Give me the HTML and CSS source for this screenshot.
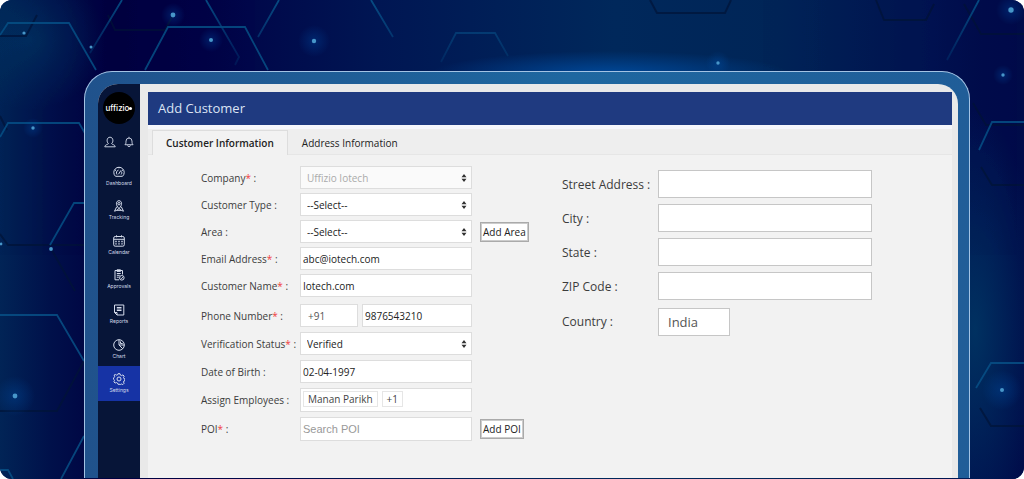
FILE: index.html
```html
<!DOCTYPE html>
<html lang="en">
<head>
  <meta charset="UTF-8" />
  <meta name="viewport" content="width=device-width, initial-scale=1.0" />
  <title>Add Customer</title>
  <link rel="stylesheet" href="styles.css">
</head>
<body>

<div class="stage">
  <!-- hexagon backdrop -->
  <svg class="backdrop" viewBox="0 0 1024 479" preserveAspectRatio="none" aria-hidden="true">
    <defs>
      <linearGradient id="base">
        <stop offset="0" stop-color="#012456" />
        <stop offset="0.05" stop-color="#00104a" />
        <stop offset="0.11" stop-color="#000040" />
        <stop offset="0.2" stop-color="#000347" />
        <stop offset="0.37" stop-color="#001653" />
        <stop offset="0.6" stop-color="#00285b" />
        <stop offset="0.76" stop-color="#002557" />
        <stop offset="0.9" stop-color="#001451" />
        <stop offset="0.96" stop-color="#000d4c" />
        <stop offset="1" stop-color="#000b49" />
      </linearGradient>
      <radialGradient id="teal">
        <stop offset="0" stop-color="#003a66" />
        <stop offset="1" stop-color="#003a66" stop-opacity="0" />
      </radialGradient>
      <radialGradient id="blue">
        <stop offset="0" stop-color="#0050a8" />
        <stop offset="1" stop-color="#0050a8" stop-opacity="0" />
      </radialGradient>
      <linearGradient id="fade" gradientUnits="userSpaceOnUse" x1="0" y1="0" x2="0" y2="72">
        <stop offset="0" stop-color="#08568c" />
        <stop offset="1" stop-color="#08568c" stop-opacity="0.15" />
      </linearGradient>
    </defs>
    <rect width="1024" height="479" fill="url(#base)" />
    <ellipse cx="30" cy="40" rx="75" ry="70" fill="url(#teal)" opacity="0.6" />
    <ellipse cx="975" cy="330" rx="65" ry="220" fill="url(#teal)" opacity="0.8" />
    <ellipse cx="610" cy="74" rx="180" ry="23" fill="url(#blue)" opacity="0.8" />
    <g class="hex-dark">
      <path d="M0 36H26L37 15M108 15L115 30H165L173 15M0 116L7 130M0 234L8 245H84M50 247L75 291M84 361L57 411H0" />
      <path d="M650 0L657 13H725L731 0M876 0L884 20H926L934 4M964 4L981 34H1024M973 103L986 125H1024M981 167L992 185H1024M980 408L991 426H1024" />
    </g>
    <g class="hex-line">
      <path d="M0 35L8 23H69L96 70M145 70L168 27H245L268 70M0 137L8 123H79L86 135M50 245L74 203H84M0 315H57L84 361M84 436L61 479M0 470H8L13 479" />
      <path d="M979 150L992 122H1024M976 388L991 363H1024" />
      <path stroke="url(#fade)" d="M122 0L90 53M206 0L239 57L235 65M279 0L258 37M371 0L393 37M441 62L456 33H495L508 56M979 0L947 60" />
    </g>
    <g class="glow">
      <circle cx="173" cy="15" r="12" />
      <circle cx="211" cy="40" r="12" />
      <circle cx="314" cy="41" r="16" />
      <circle cx="1011" cy="10" r="15" />
      <circle cx="1003" cy="75" r="10" />
      <circle cx="718" cy="63" r="12" />
      <circle cx="15" cy="396" r="20" />
      <circle cx="1002" cy="390" r="20" />
      <circle cx="33" cy="128" r="10" />
    </g>
    <g class="dots">
      <circle cx="173" cy="15" r="2.4" />
      <circle cx="211" cy="40" r="2" />
      <circle cx="314" cy="41" r="2.2" />
      <circle cx="24" cy="33" r="1.6" />
      <circle cx="91" cy="47" r="1.5" />
      <circle cx="33" cy="128" r="1.7" />
      <circle cx="51" cy="249" r="1.9" />
      <circle cx="1" cy="244" r="1.4" />
      <circle cx="15" cy="396" r="2.4" />
      <circle cx="718" cy="63" r="1.7" />
      <circle cx="1011" cy="10" r="2.7" />
      <circle cx="1003" cy="75" r="1.7" />
      <circle cx="1002" cy="390" r="2" />
    </g>
  </svg>

  <div class="device">
    <div class="screen">

      <aside class="sidebar">
        <div class="logo">uffizio<span class="logo-dot"></span></div>
        <div class="quick">
          <button type="button" aria-label="Account">
            <svg width="12" height="12" viewBox="0 0 13 12"><path d="M4.8 7.6C2.5 6.2 2.8 .8 6.5 .8s4 5.4 1.7 6.8c.2 1.2 3.7 1 4 3.6H.8c.3-2.6 3.8-2.4 4-3.6z" /></svg>
          </button>
          <button type="button" aria-label="Notifications">
            <svg width="10" height="12" viewBox="0 0 11 13"><path d="M1 9.5c1.2-1 1.2-2 1.2-4a3.3 3.3 0 0 1 6.6 0c0 2 0 3 1.2 4zM5.5 2V.8M4 10.2c.2 2 2.8 2 3 0" /></svg>
          </button>
        </div>
        <nav class="menu">
          <a href="#dashboard">
            <svg width="12" height="12" viewBox="0 0 12 12"><path d="M2.5 10.3a5.2 5.2 0 1 1 7 0zM4 8.5a2.8 2.8 0 0 1 1.5-4.4M8.5 5.5c.5 1 .4 2.2-.4 3M5.5 8.2L8 4.3M6 1v1.3M2 4l1 .6M10 4l-1 .6" /></svg>
            Dashboard
          </a>
          <a href="#tracking">
            <svg width="12" height="12" viewBox="0 0 12 12"><path d="M6 8.5C2 4.8 3.2 .7 6 .7s4 4.1 0 7.8z" /><circle cx="6" cy="3.7" r="1.2" /><path d="M3.7 6.8L1.5 11.2l2.3-.9L6 8.5l2.2 1.8 2.3.9-2.2-4.4M3.8 10.3h4.4" /></svg>
            Tracking
          </a>
          <a href="#calendar">
            <svg width="12" height="12" viewBox="0 0 12 12"><rect x=".7" y="1.5" width="10.6" height="9.7" rx="1.5" /><path d="M.7 4.3h10.6M3.5 .3v2M8.5 .3v2" /><path d="M2.3 6.5h7.4M2.3 8.8h7.4" stroke-dasharray="1.4 1.6" stroke-width="1.3" /></svg>
            Calendar
          </a>
          <a href="#approvals">
            <svg width="12" height="12" viewBox="0 0 12 12"><path d="M6 10.8H2V1.5h7.5v4M4 .8h3.5v1.6H4zM3.8 4.5h4M3.8 6.3h3M3.8 8.2h2" /><circle cx="8.8" cy="8.8" r="2.3" /><path d="M7.8 8.8l.8.8 1.3-1.5" /></svg>
            Approvals
          </a>
          <a href="#reports">
            <svg width="12" height="12" viewBox="0 0 12 12"><path d="M4 11L1.5 8.5V1h9.3v10H4V8.5H1.5M3.8 3.5h4.7M3.8 5h4.7M3.8 6.5h4.7" /></svg>
            Reports
          </a>
          <a href="#chart">
            <svg width="12" height="12" viewBox="0 0 12 12"><circle cx="6" cy="6" r="5.3" /><path d="M6 .7V6h5.3M6 6l3.7 3.7M7.5 2.5v2h2.2" /></svg>
            Chart
          </a>
          <a href="#settings" class="active">
            <svg width="12" height="12" viewBox="0 0 12 12"><path d="M5 .7h2l.4 1.4 1.2.5 1.3-.7 1.3 1.3-.7 1.3.5 1.2 1 .3v1.5l-1 .4-.5 1.2.6 1.2-1.3 1.3-1.2-.6-1.3.5L7 11.3H5l-.5-1.300-1.2-.5-1.2.6L.9 8.8l.6-1.2L1 6.5.4 6V5l.8-.5.5-1.2-.6-1.2L2.3 1.5l1.2.6L4.6 1.8z" /><circle cx="6" cy="6" r="2" /></svg>
            Settings
          </a>
        </nav>
      </aside>

      <main class="page">
        <h1>Add Customer</h1>

        <div class="tabs" role="tablist">
          <button type="button" role="tab" class="tab active" aria-selected="true">Customer Information</button>
          <button type="button" role="tab" class="tab" aria-selected="false">Address Information</button>
        </div>

        <form class="forms">
          <div class="customer">
            <div class="group">
              <div class="field">
                <label for="company">Company<b>*</b> :</label>
                <select id="company" disabled><option>Uffizio Iotech</option></select>
              </div>
              <div class="field">
                <label for="type">Customer Type :</label>
                <select id="type"><option>--Select--</option></select>
              </div>
              <div class="field">
                <label for="area">Area :</label>
                <select id="area"><option>--Select--</option></select>
                <button type="button" class="add">Add Area</button>
              </div>
              <div class="field">
                <label for="email">Email Address<b>*</b> :</label>
                <input id="email" type="text" value="abc@iotech.com">
              </div>
              <div class="field">
                <label for="name">Customer Name<b>*</b> :</label>
                <input id="name" type="text" value="Iotech.com">
              </div>
            </div>

            <div class="group details">
              <div class="field">
                <label for="phone">Phone Number<b>*</b> :</label>
                <div class="phone">
                  <input class="code" type="text" value="+91" aria-label="Country code">
                  <input id="phone" type="text" value="9876543210">
                </div>
              </div>
              <div class="field">
                <label for="status">Verification Status<b>*</b> :</label>
                <select id="status"><option>Verified</option></select>
              </div>
              <div class="field">
                <label for="birth">Date of Birth :</label>
                <input id="birth" type="text" value="02-04-1997">
              </div>
              <div class="field">
                <label for="employees">Assign Employees :</label>
                <div class="chips">
                  <span class="chip">Manan Parikh</span>
                  <span class="chip">+1</span>
                  <input id="employees" type="text">
                </div>
              </div>
              <div class="field">
                <label for="poi">POI<b>*</b> :</label>
                <input id="poi" class="search" type="text" placeholder="Search POI">
                <button type="button" class="add">Add POI</button>
              </div>
            </div>
          </div>

          <div class="address">
            <label for="street">Street Address :</label>
            <input id="street" type="text">
            <label for="city">City :</label>
            <input id="city" type="text">
            <label for="state">State :</label>
            <input id="state" type="text">
            <label for="zip">ZIP Code :</label>
            <input id="zip" type="text">
            <label for="country">Country :</label>
            <input id="country" class="country" type="text" value="India">
          </div>
        </form>
      </main>

    </div>
  </div>
</div>

</body>
</html>
```
FILE: styles.css
```css
* {
  box-sizing: border-box;
}
body {
  margin: 0;
  background: #fff;
  font-family: "Open Sans", "Noto Sans", sans-serif;
  font-size: 10px;
  color: #3c3c3c;
}
button, input, select {
  font: inherit;
  margin: 0;
}

.stage {
  position: relative;
  display: flex;
  min-height: 100vh;
  padding: 71px 54px 1px 84px;
  border-radius: 12px;
  overflow: hidden;
  background: #00104a;
}
.backdrop {
  position: absolute;
  inset: 0;
  width: 100%;
  height: 100%;
}
.hex-line {
  fill: none;
  stroke: #075086;
  stroke-width: 1.8;
  opacity: 0.85;
}
.hex-dark {
  fill: none;
  stroke: #001437;
  stroke-width: 2;
  opacity: 0.7;
}
.glow {
  fill: url(#blue);
  opacity: 0.35;
}
.dots {
  fill: #4796c9;
}

/* device frame */
.device {
  position: relative;
  flex: 1;
  display: flex;
  padding: 12px 11px 0 13px;
  border: 1px solid #a3c3e4;
  border-bottom: 0;
  border-radius: 28px 28px 0 0;
  background: linear-gradient(90deg, #20528c, #1e67a0 55%, #205d98);
}
.screen {
  flex: 1;
  display: flex;
  border-radius: 20px 20px 0 0;
  overflow: hidden;
  background: #e9e9e9;
}

/* sidebar */
.sidebar {
  width: 42px;
  background: #071538;
  color: #d5dcec;
}
.sidebar svg {
  display: block;
  fill: none;
  stroke: #d5dcec;
  stroke-width: 1;
}
.logo {
  display: flex;
  align-items: center;
  justify-content: center;
  width: 32px;
  height: 32px;
  margin: 8px auto 0;
  border-radius: 50%;
  background: #000;
  color: #fff;
  font: 500 8px Inter, sans-serif;
}
.logo-dot {
  width: 3px;
  height: 3px;
  border-radius: 50%;
  background: #fff;
}
.quick {
  display: flex;
  align-items: center;
  justify-content: center;
  gap: 8px;
  height: 35px;
}
.quick button {
  padding: 0;
  border: 0;
  background: none;
  cursor: pointer;
}
.menu {
  display: grid;
  grid-auto-rows: 1fr;
  height: 242px;
}
.menu a {
  display: flex;
  flex-direction: column;
  align-items: center;
  justify-content: center;
  gap: 1px;
  color: #d5dcec;
  font: 5px/8px Inter, sans-serif;
  text-decoration: none;
}
.menu .active {
  background: #1633a5;
}

/* page */
.page {
  flex: 1;
  margin: 8px 6px 0 8px;
  background: #f2f2f2;
}
h1 {
  margin: 0;
  padding: 0 10px;
  background: #1f3a80;
  color: #dce4f4;
  font-size: 13px;
  font-weight: 400;
  line-height: 33px;
}
.tabs {
  display: flex;
  padding: 5px 4px 0;
  border-bottom: 1px solid #e6e6e6;
  background: linear-gradient(#f5f6fb 4px, #eee 4px);
}
.tab {
  height: 24px;
  padding: 0 13px;
  border: 1px solid transparent;
  border-bottom: 0;
  background: none;
  color: #222;
  cursor: pointer;
}
.tab.active {
  margin-bottom: -1px;
  padding-bottom: 1px;
  height: 25px;
  border-color: #ddd;
  background: #f2f2f2;
  font-weight: 600;
}

.forms {
  display: flex;
  gap: 40px;
  padding: 11px 53px 36px;
}
.group {
  display: grid;
  gap: 4px;
}
.details {
  gap: 5px;
  margin-top: 7px;
}
.field {
  display: grid;
  grid-template-columns: 99px 172px 50px;
  align-items: center;
}
.field b {
  color: #f03c3c;
  font-weight: 400;
}
.field label {
  white-space: nowrap;
}
.field input,
.field select,
.chips {
  width: 100%;
  min-width: 0;
  height: 23px;
  padding: 0 2px;
  border: 1px solid #ddd;
  border-radius: 0;
  background: #fff;
  color: #222;
}
.field select {
  appearance: none;
  padding: 0 6px;
  background: #fff url("data:image/svg+xml,%3Csvg xmlns='http://www.w3.org/2000/svg' width='6' height='8' viewBox='0 0 6 8'%3E%3Cpath d='M.5 3.3L3 0l2.5 3.3zM.5 4.7L3 8l2.5-3.3z' fill='%23333'/%3E%3C/svg%3E") no-repeat right 4px center;
}
.field select:disabled {
  background-color: #fafafa;
  color: #aaa;
  opacity: 1;
}
.phone {
  display: flex;
  gap: 4px;
}
.phone .code {
  flex: 0 0 58px;
  padding: 0 7px;
  color: #555;
}
.chips {
  display: flex;
  align-items: flex-start;
  gap: 4px;
  height: 24px;
  padding: 2px;
}
.chip {
  padding: 0 4px;
  border: 1px solid #e6e6e6;
  color: #444;
  line-height: 14px;
  white-space: nowrap;
}
.chips input {
  flex: 1;
  height: 16px;
  border: 0;
}
.field .search {
  height: 24px;
  font-family: "Liberation Sans", Arial, sans-serif;
  font-size: 11px;
}
.search::placeholder {
  color: #999;
}
.add {
  height: 20px;
  margin: 0 0 0 8px;
  padding: 0 2px;
  border: 1px solid #aaa;
  outline: 1px solid #ccc;
  outline-offset: -2px;
  background: #fff;
  color: #222;
  line-height: 16px;
  white-space: nowrap;
  justify-self: start;
  cursor: pointer;
}

.address {
  display: grid;
  grid-template-columns: 96px 214px;
  gap: 6px 0;
  align-content: start;
  align-items: center;
  padding-top: 4px;
  font-size: 12px;
}
.address label {
  white-space: nowrap;
}
.address input {
  height: 28px;
  padding: 0 9px;
  border: 1px solid #c6c6c6;
  border-radius: 0;
  background: #fff;
  color: #555;
}
.address .country {
  width: 72px;
  margin-top: 2px;
  font-size: 13px;
}
```
